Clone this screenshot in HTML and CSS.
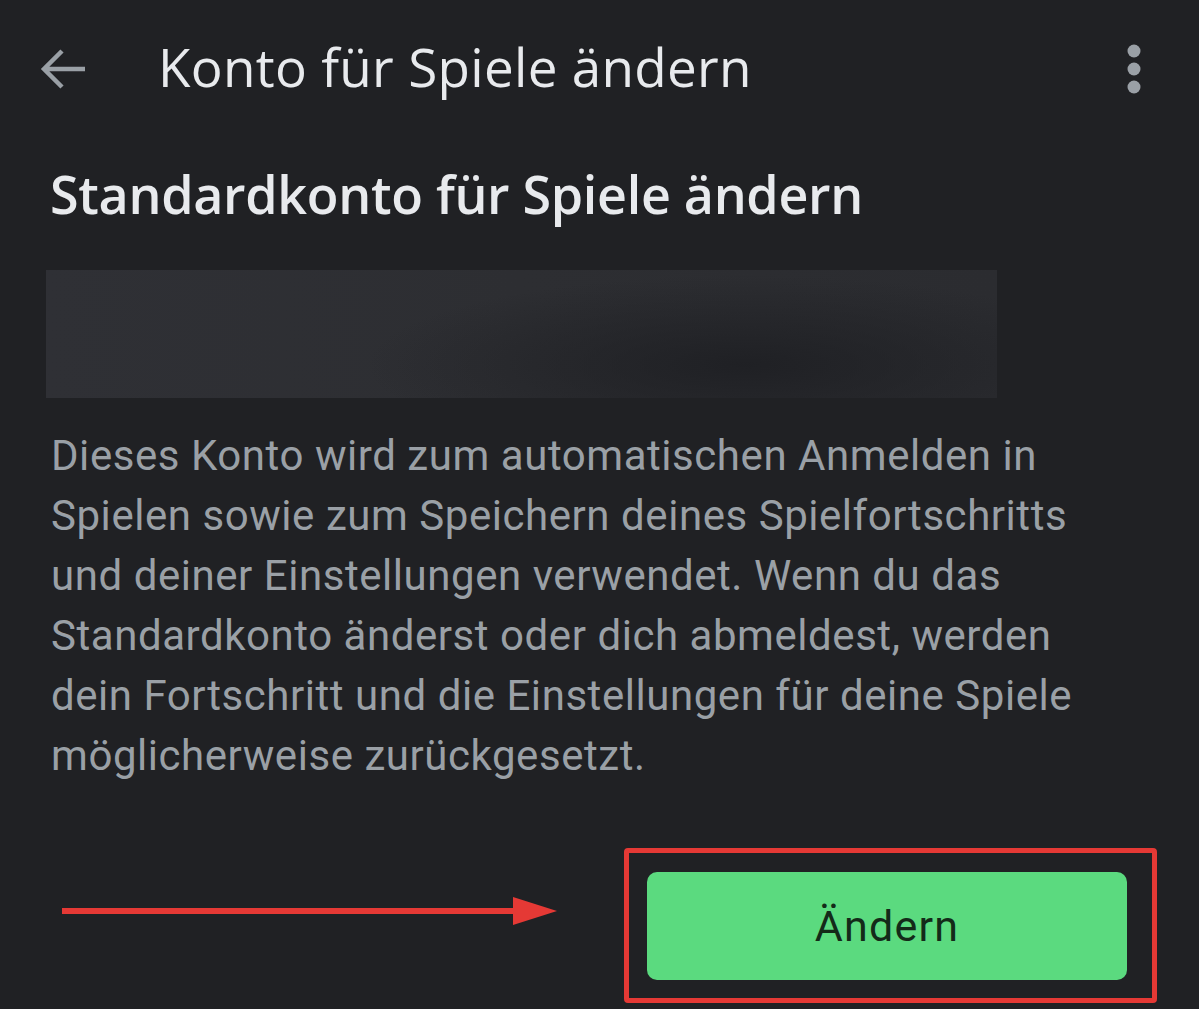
FILE: index.html
```html
<!DOCTYPE html>
<html lang="de">
<head>
  <meta charset="UTF-8" />
  <title>Konto für Spiele ändern</title>
  <link rel="stylesheet" href="styles.css">
</head>
<body>

  <!-- Toolbar -->
  <nav class="toolbar">
    <svg class="back-icon" viewBox="0 0 48 48" width="48" height="48">
      <path d="M47 24H6M24 6L6 24l18 18" fill="none" stroke="#9aa0a6" stroke-width="4.5"/>
    </svg>
    <h1 class="toolbar-title">Konto für Spiele ändern</h1>
    <svg class="more-icon" viewBox="0 0 14 50" width="14" height="50">
      <circle cx="7" cy="7" r="6.5" fill="#9aa0a6"/>
      <circle cx="7" cy="25" r="6.5" fill="#9aa0a6"/>
      <circle cx="7" cy="43" r="6.5" fill="#9aa0a6"/>
    </svg>
  </nav>

  <main class="content">
    <h2 class="section-title">Standardkonto für Spiele ändern</h2>

    <div class="account-blur"></div>

    <p class="description">
      Dieses Konto wird zum automatischen Anmelden in<br>
      Spielen sowie zum Speichern deines Spielfortschritts<br>
      und deiner Einstellungen verwendet. Wenn du das<br>
      Standardkonto änderst oder dich abmeldest, werden<br>
      dein Fortschritt und die Einstellungen für deine Spiele<br>
      möglicherweise zurückgesetzt.
    </p>

    <div class="action-row">
      <svg class="hint-arrow" viewBox="0 0 500 32" width="500" height="32">
        <path d="M0 16H460" stroke="#e53935" stroke-width="6"/>
        <path d="M451 2L495 16L451 30Z" fill="#e53935"/>
      </svg>
      <div class="highlight">
        <button class="change-btn">Ändern</button>
      </div>
    </div>
  </main>

</body>
</html>
```

FILE: styles.css
```css
* {
  margin: 0;
  padding: 0;
  box-sizing: border-box;
}

body {
  background-color: #202124;
  width: 1199px;
  height: 1009px;
  overflow: hidden;
  font-family: Roboto, 'Noto Sans', sans-serif;
}

.toolbar {
  display: flex;
  align-items: center;
  height: 138px;
  padding: 0 58px 0 38px;
}

.back-icon {
  flex-shrink: 0;
}

.toolbar-title {
  flex: 1;
  margin: 0 0 4px 72px;
  font-family: 'Open Sans', sans-serif;
  font-weight: 400;
  font-size: 53px;
  letter-spacing: 0.3px;
  line-height: 60px;
  color: #e8eaed;
}

.more-icon {
  flex-shrink: 0;
}

.content {
  padding: 26px 0 0 46px;
}

.section-title {
  margin-left: 4px;
  font-family: 'Open Sans', sans-serif;
  font-weight: 600;
  font-size: 52px;
  letter-spacing: -0.3px;
  color: #e8eaed;
  line-height: 60px;
}

.account-blur {
  width: 951px;
  height: 128px;
  margin-top: 46px;
  background:
    radial-gradient(ellipse 380px 90px at 700px 95px, rgba(30, 31, 35, 0.9), rgba(30, 31, 35, 0) 100%),
    linear-gradient(90deg, #2f3035 0%, #2d2e32 50%, #2b2c30 100%);
}

.description {
  margin: 28px 0 0 5px;
  font-size: 42px;
  line-height: 60px;
  color: #9aa0a6;
  letter-spacing: 0.55px;
}

.action-row {
  display: flex;
  align-items: center;
  margin-top: 62px;
}

.hint-arrow {
  margin: 0 0 30px 16px;
  flex-shrink: 0;
}

.highlight {
  margin-left: 62px;
  width: 533px;
  height: 155px;
  border: 5px solid #e53935;
  border-radius: 4px;
  padding: 19px 25px 0 18px;
}

.change-btn {
  width: 480px;
  height: 108px;
  border: none;
  border-radius: 10px;
  background-color: #5bda7f;
  color: #142a19;
  font-family: Roboto, sans-serif;
  font-size: 43px;
  font-weight: 400;
  letter-spacing: 1.2px;
}
```
